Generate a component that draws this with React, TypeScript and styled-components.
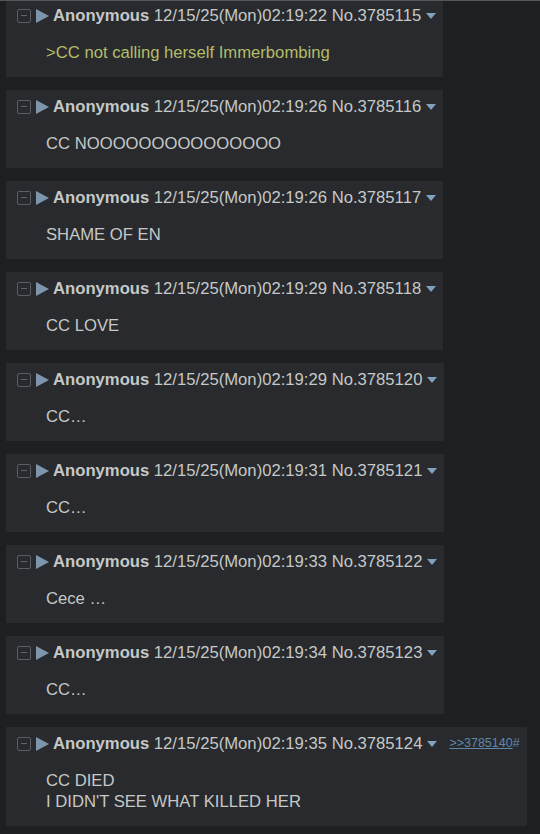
import React from "react";
import styled, {createGlobalStyle} from "styled-components";

const GlobalStyle = createGlobalStyle`
	html, body {
		margin: 0;
		padding: 0;
		background: #1d1f21;
	}

	body {
		font-family: "Liberation Sans", Arial, sans-serif;
		font-size: 16.67px;
		color: #c5c8c6;
		overflow: hidden;
	}
`;

const TopEdge = styled.div`
	position: sticky;
	top: 0;
	z-index: 1;
	height: 1px;
	background: #53565a;
`;

const Thread = styled.div`
	display: flex;
	flex-direction: column;
	align-items: flex-start;
	gap: 13px;
	margin-top: -2px;
	padding: 0 0 9px 6px;
`;

const Reply = styled.div`
	background: #282a2e;
	padding: 6px 7px 14px 0;
`;

const PostInfo = styled.div`
	display: flex;
	align-items: center;
	height: 21px;
	line-height: 21px;
	white-space: nowrap;
`;

const HideButton = styled.span`
	box-sizing: border-box;
	width: 14px;
	height: 14px;
	margin: 0 5px 0 11px;
	border: 1px solid #5a5e64;
	border-radius: 2px;
	display: flex;
	align-items: center;
	justify-content: center;

	&::after {
		content: "";
		width: 6px;
		height: 1.5px;
		background: #5f646a;
	}
`;

const Expand = styled.svg`
	width: 13px;
	height: 14px;
	margin-right: 4px;
	fill: #7d95ad;
`;

const Name = styled.span`
	font-weight: bold;
	color: #c5c8c6;
`;

const DateTime = styled.span`
	margin-left: 4.6px;
`;

const PostNum = styled.span`
	margin-left: 4.6px;
`;

const MenuArrow = styled.svg`
	width: 10px;
	height: 6px;
	margin-left: 5px;
	fill: #81a2be;
`;

const Backlinks = styled.span`
	margin-left: 12px;
	font-size: 12.5px;
	color: #5f89ac;
`;

const Backlink = styled.a`
	color: #5f89ac;
	text-decoration: underline;
`;

const Message = styled.blockquote<{$green?: boolean}>`
	margin: 16px 0 0 40px;
	line-height: 21px;
	white-space: pre-line;
	color: ${p => (p.$green ? "#b5bd68" : "#c5c8c6")};
`;

type Post_T = {
	time: string;
	no: string;
	text: string;
	green?: boolean;
	backlink?: string;
};

const posts: Post_T[] = [
	{time: "02:19:22", no: "3785115", text: ">CC not calling herself Immerbombing", green: true},
	{time: "02:19:26", no: "3785116", text: "CC N" + "OOOOO" + "OOOOO" + "OOOOO"},
	{time: "02:19:26", no: "3785117", text: "SHAME OF EN"},
	{time: "02:19:29", no: "3785118", text: "CC LOVE"},
	{time: "02:19:29", no: "3785120", text: "CC\u2026"},
	{time: "02:19:31", no: "3785121", text: "CC\u2026"},
	{time: "02:19:33", no: "3785122", text: "Cece \u2026"},
	{time: "02:19:34", no: "3785123", text: "CC\u2026"},
	{time: "02:19:35", no: "3785124", text: "CC DIED\nI DIDN'T SEE WHAT KILLED HER", backlink: "3785140"},
];

function Post ({time, no, text, green, backlink}: Post_T) {
	return (
		<Reply>
			<PostInfo>
				<HideButton />
				<Expand viewBox="0 0 13 14">
					<polygon points="0,0 13,7 0,14" />
				</Expand>
				<Name>Anonymous</Name>
				<DateTime>12/15/25(Mon){time}</DateTime>
				<PostNum>No.{no}</PostNum>
				<MenuArrow viewBox="0 0 10 6">
					<polygon points="0,0 10,0 5,6" />
				</MenuArrow>
				{backlink &&
					<Backlinks>
						<Backlink href="#">&gt;&gt;{backlink}</Backlink>#
					</Backlinks>
				}
			</PostInfo>
			<Message $green={green}>{text}</Message>
		</Reply>
	);
}

export default function App () {
	return (
		<>
			<GlobalStyle />
			<TopEdge />
			<Thread>
				{posts.map(p => <Post key={p.no} {...p} />)}
			</Thread>
		</>
	);
}
